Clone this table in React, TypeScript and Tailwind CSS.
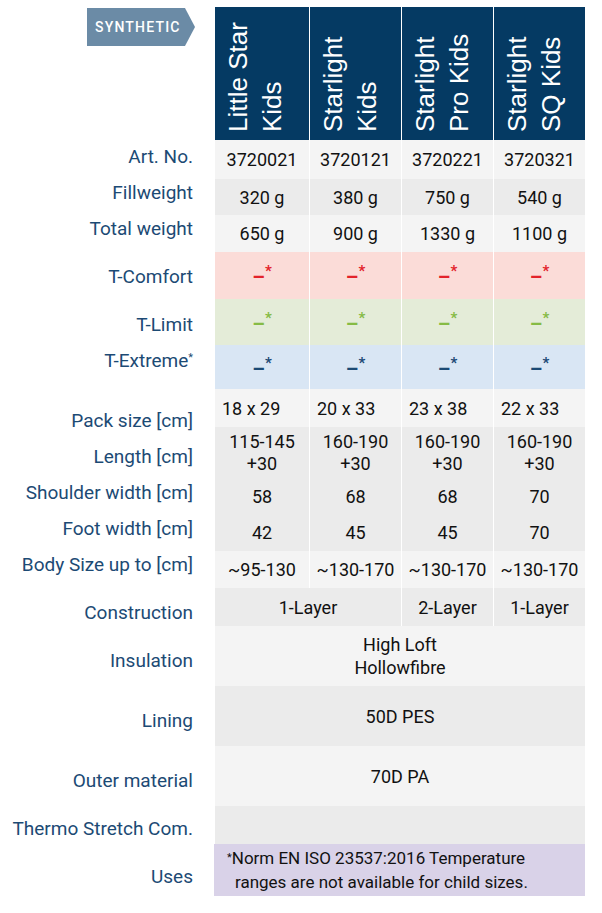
import type { ReactNode } from 'react'

const grid = 'grid grid-cols-[94px_91px_91px_91px] gap-x-px'

const products = [
  ['Little Star', 'Kids'],
  ['Starlight', 'Kids'],
  ['Starlight', 'Pro Kids'],
  ['Starlight', 'SQ Kids'],
]

const labels: { text: ReactNode; mt: string }[] = [
  { text: 'Art. No.', mt: '' },
  { text: 'Fillweight', mt: '' },
  { text: 'Total weight', mt: '' },
  { text: 'T-Comfort', mt: 'mt-3' },
  { text: 'T-Limit', mt: 'mt-3' },
  { text: <>T-Extreme<sup className="text-[11px]">*</sup></>, mt: '' },
  { text: 'Pack size [cm]', mt: 'mt-6' },
  { text: 'Length [cm]', mt: '' },
  { text: 'Shoulder width [cm]', mt: '' },
  { text: 'Foot width [cm]', mt: '' },
  { text: 'Body Size up to [cm]', mt: '' },
  { text: 'Construction', mt: 'mt-3' },
  { text: 'Insulation', mt: 'mt-3' },
  { text: 'Lining', mt: 'mt-6' },
  { text: 'Outer material', mt: 'mt-6' },
  { text: 'Thermo Stretch Com.', mt: 'mt-3' },
  { text: 'Uses', mt: 'mt-3' },
]

function Cell({ children, className = '' }: { children?: ReactNode; className?: string }) {
  return (
    <div className={`flex items-center justify-center text-center ${className}`}>
      {children}
    </div>
  )
}

function ValueRow({ values, h, bg }: { values: ReactNode[]; h: string; bg: string }) {
  return (
    <div className={`${grid} ${h}`}>
      {values.map((v, i) => (
        <Cell key={i} className={bg}>
          {v}
        </Cell>
      ))}
    </div>
  )
}

function TempMark({ color }: { color: string }) {
  return (
    <span className={`${color} text-[20px] font-bold leading-none`}>
      –<span className="align-super text-[15px]">*</span>
    </span>
  )
}

export default function App() {
  return (
    <div className="flex min-h-[913px] bg-white font-['Roboto',sans-serif]">
      {/* Labels */}
      <div className="w-[215px] shrink-0">
        <div className="flex h-[139px] justify-end pr-[20px] pt-2">
          <div className="flex h-[38px] w-[108px] items-center bg-[#6b8ba6] pl-2 text-[14px] font-medium tracking-[1.2px] text-white [clip-path:polygon(0_0,calc(100%-10px)_0,100%_50%,calc(100%-10px)_100%,0_100%)]">
            SYNTHETIC
          </div>
        </div>
        {labels.map((l, i) => (
          <div
            key={i}
            className={`flex h-9 items-center justify-end whitespace-nowrap pr-[22px] text-[19px] text-[#1c4a74] ${l.mt}`}
          >
            <span>{l.text}</span>
          </div>
        ))}
      </div>

      {/* Table */}
      <div className="mt-[7px] w-[370px] text-[18px] text-[#111]">
        <div className={`${grid} h-[133px]`}>
          {products.map((p, i) => (
            <div key={i} className="h-[133px] overflow-hidden bg-[#053a63]">
              <div className="h-[133px] w-full rotate-180 pr-[6px] pt-[8px] font-['Liberation_Sans',sans-serif] text-[26px] leading-[34px] text-white [writing-mode:vertical-rl]">
                {p[0]}
                <br />
                {p[1]}
              </div>
            </div>
          ))}
        </div>

        <ValueRow h="h-[39px]" bg="bg-[#f4f4f4]" values={['3720021', '3720121', '3720221', '3720321']} />
        <ValueRow h="h-[36px]" bg="bg-[#ebebeb]" values={['320 g', '380 g', '750 g', '540 g']} />
        <ValueRow h="h-[37px]" bg="bg-[#f4f4f4]" values={['650 g', '900 g', '1330 g', '1100 g']} />
        <ValueRow
          h="h-[47px]"
          bg="bg-[#fbdcd8]"
          values={[0, 1, 2, 3].map((i) => <TempMark key={i} color="text-[#e3232b]" />)}
        />
        <ValueRow
          h="h-[46px]"
          bg="bg-[#e4ecd8]"
          values={[0, 1, 2, 3].map((i) => <TempMark key={i} color="text-[#86bb45]" />)}
        />
        <ValueRow
          h="h-[44px]"
          bg="bg-[#d9e6f4]"
          values={[0, 1, 2, 3].map((i) => <TempMark key={i} color="text-[#1c4a74]" />)}
        />

        <div className={`${grid} h-[38px]`}>
          {['18 x 29', '20 x 33', '23 x 38', '22 x 33'].map((v) => (
            <div key={v} className="flex items-center bg-[#f4f4f4] pl-[7px]">
              {v}
            </div>
          ))}
        </div>
        <ValueRow
          h="h-[51px]"
          bg="bg-[#ebebeb] leading-[22px]"
          values={['115-145', '160-190', '160-190', '160-190'].map((v) => (
            <span key={v}>
              {v}
              <br />
              +30
            </span>
          ))}
        />
        <ValueRow h="h-[36px]" bg="bg-[#ebebeb]" values={['58', '68', '68', '70']} />
        <ValueRow h="h-[37px]" bg="bg-[#ebebeb]" values={['42', '45', '45', '70']} />
        <ValueRow h="h-[37px]" bg="bg-[#f4f4f4]" values={['~95-130', '~130-170', '~130-170', '~130-170']} />

        <div className={`${grid} h-[38px]`}>
          <Cell className="col-span-2 bg-[#ebebeb]">1-Layer</Cell>
          <Cell className="bg-[#ebebeb]">2-Layer</Cell>
          <Cell className="bg-[#ebebeb]">1-Layer</Cell>
        </div>
        <Cell className="h-[60px] bg-[#f4f4f4] leading-[23px]">
          High Loft
          <br />
          Hollowfibre
        </Cell>
        <Cell className="h-[60px] bg-[#ebebeb]">50D PES</Cell>
        <Cell className="h-[60px] bg-[#f4f4f4]">70D PA</Cell>
        <div className="h-[38px] bg-[#ebebeb]" />
        <div className="-ml-px flex h-[52px] flex-col justify-center bg-[#d9d2e8] pl-[13px] text-[17px] leading-[24px] text-[#111]">
          <p>
            <span className="align-top text-[11px]">*</span>Norm EN ISO 23537:2016 Temperature
          </p>
          <p className="pl-2">ranges are not available for child sizes.</p>
        </div>
      </div>
    </div>
  )
}
